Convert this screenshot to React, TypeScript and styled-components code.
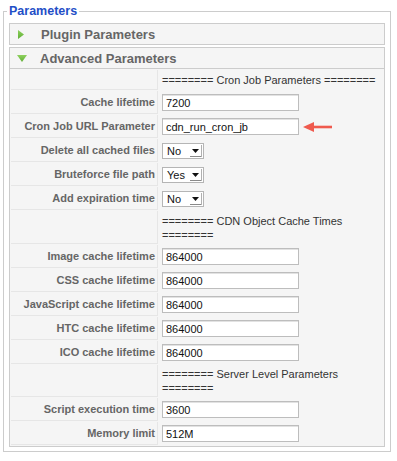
import React from "react";
import styled, { createGlobalStyle } from "styled-components";

const Global = createGlobalStyle`
  html, body { margin: 0; padding: 0; background: #fff; }
  body { font-family: "Liberation Sans", Arial, sans-serif; }
`;

const Fieldset = styled.fieldset`
  margin: 3px 0 0 3px;
  width: 388px;
  box-sizing: border-box;
  border: 1px solid #cccccc;
  padding: 4px 5px 4px 5px;
  min-width: 0;
`;

const Legend = styled.legend`
  color: #1f4fc7;
  font-size: 12.5px;
  font-weight: bold;
  line-height: 16px;
  padding: 0 2px;
  margin-left: -2px;
`;

const Pane = styled.div`
  border: 1px solid #cccccc;
  background: #f5f5f5;
  & + & { margin-top: 2px; }
`;

const Title = styled.div<{ $open?: boolean }>`
  height: 20px;
  display: flex;
  align-items: center;
  padding-left: ${(p) => (p.$open ? "7px" : "8px")};
  color: #666;
  font-size: 13px;
  font-weight: bold;
  border-bottom: ${(p) => (p.$open ? "1px solid #cccccc" : "none")};
`;

const TriangleBox = styled.span`
  width: 15px;
  margin-right: 8px;
  display: inline-flex;
  align-items: center;
  justify-content: flex-start;
`;

const Params = styled.div`
  display: grid;
  grid-template-columns: 147px 1fr;
  column-gap: 1px;
  row-gap: 1px;
  padding: 1px;
`;

const Key = styled.div`
  border-right: 1px solid #e6e6e6;
  border-bottom: 1px solid #e6e6e6;
  color: #666;
  font-size: 11px;
  font-weight: bold;
  text-align: right;
  padding-right: 2px;
  display: flex;
  align-items: center;
  justify-content: flex-end;
  white-space: nowrap;
`;

const Value = styled.div<{ $h?: number }>`
  min-height: ${(p) => p.$h ?? 23}px;
  display: flex;
  align-items: center;
  padding-left: 3px;
`;

const SectionText = styled.div`
  color: #333;
  font-size: 11px;
  line-height: 14px;
  padding: 2px 0;
  white-space: nowrap;
`;

const Input = styled.div`
  width: 137px;
  height: 17px;
  box-sizing: border-box;
  border: 1px solid #bdbdbd;
  box-shadow: inset 0 1px 0 #e2e2e2;
  background: #fff;
  font-size: 11px;
  color: #111;
  padding-left: 3px;
  display: flex;
  align-items: center;
`;

const Select = styled.div`
  width: 42px;
  height: 16px;
  box-sizing: border-box;
  border: 1px solid #b5b5b5;
  background: #fff;
  font-size: 11px;
  color: #111;
  padding-left: 4px;
  display: flex;
  align-items: center;
  justify-content: space-between;
`;

const ArrowBox = styled.span`
  display: inline-flex;
  width: 14px;
  height: 14px;
`;

const Pointer = styled.span`
  display: inline-flex;
  margin-left: 4px;
`;

const RightTri = () => (
  <svg width="6" height="9" viewBox="0 0 6 9">
    <defs>
      <linearGradient id="gr" x1="0" y1="0" x2="0" y2="1">
        <stop offset="0" stopColor="#8fd15e" />
        <stop offset="1" stopColor="#5fae35" />
      </linearGradient>
    </defs>
    <polygon points="0,0 6,4.5 0,9" fill="url(#gr)" />
  </svg>
);

const DownTri = () => (
  <svg width="10" height="7" viewBox="0 0 10 7">
    <defs>
      <linearGradient id="gd" x1="0" y1="0" x2="0" y2="1">
        <stop offset="0" stopColor="#8fd15e" />
        <stop offset="1" stopColor="#5fae35" />
      </linearGradient>
    </defs>
    <polygon points="0,0 10,0 5,7" fill="url(#gd)" />
  </svg>
);

const SelArrow = () => (
  <svg width="14" height="14" viewBox="0 0 14 14">
    <polygon points="3,5 10,5 6.5,9" fill="#111" />
    <line x1="1" y1="12.5" x2="13" y2="12.5" stroke="#8a8a8a" strokeWidth="1" />
    <line x1="12.5" y1="1" x2="12.5" y2="13" stroke="#b0b0b0" strokeWidth="1" />
  </svg>
);

const RedArrow = () => (
  <svg width="30" height="12" viewBox="0 0 30 12">
    <line x1="9" y1="6" x2="29" y2="6" stroke="#ef5a4e" strokeWidth="2.6" />
    <polygon points="0,6 11,1 11,11" fill="#ef5a4e" />
  </svg>
);

type Row =
  | { kind: "section"; text: React.ReactNode; h?: number }
  | { kind: "input"; label: string; value: string; arrow?: boolean }
  | { kind: "select"; label: string; value: string };

const rows: Row[] = [
  { kind: "section", text: "======== Cron Job Parameters ========", h: 20 },
  { kind: "input", label: "Cache lifetime", value: "7200" },
  { kind: "input", label: "Cron Job URL Parameter", value: "cdn_run_cron_jb", arrow: true },
  { kind: "select", label: "Delete all cached files", value: "No" },
  { kind: "select", label: "Bruteforce file path", value: "Yes" },
  { kind: "select", label: "Add expiration time", value: "No" },
  {
    kind: "section",
    text: (
      <>
        ======== CDN Object Cache Times
        <br />
        ========
      </>
    ),
    h: 33,
  },
  { kind: "input", label: "Image cache lifetime", value: "864000" },
  { kind: "input", label: "CSS cache lifetime", value: "864000" },
  { kind: "input", label: "JavaScript cache lifetime", value: "864000" },
  { kind: "input", label: "HTC cache lifetime", value: "864000" },
  { kind: "input", label: "ICO cache lifetime", value: "864000" },
  {
    kind: "section",
    text: (
      <>
        ======== Server Level Parameters
        <br />
        ========
      </>
    ),
    h: 32,
  },
  { kind: "input", label: "Script execution time", value: "3600" },
  { kind: "input", label: "Memory limit", value: "512M" },
];

export default function App() {
  return (
    <>
      <Global />
      <Fieldset>
        <Legend>Parameters</Legend>
        <Pane>
          <Title>
            <TriangleBox>
              <RightTri />
            </TriangleBox>
            Plugin Parameters
          </Title>
        </Pane>
        <Pane>
          <Title $open>
            <TriangleBox>
              <DownTri />
            </TriangleBox>
            Advanced Parameters
          </Title>
          <Params>
            {rows.map((r, i) => (
              <React.Fragment key={i}>
                <Key>{r.kind === "section" ? "" : r.label}</Key>
                {r.kind === "section" ? (
                  <Value $h={r.h}>
                    <SectionText>{r.text}</SectionText>
                  </Value>
                ) : r.kind === "input" ? (
                  <Value>
                    <Input>{r.value}</Input>
                    {r.arrow && (
                      <Pointer>
                        <RedArrow />
                      </Pointer>
                    )}
                  </Value>
                ) : (
                  <Value>
                    <Select>
                      {r.value}
                      <ArrowBox>
                        <SelArrow />
                      </ArrowBox>
                    </Select>
                  </Value>
                )}
              </React.Fragment>
            ))}
          </Params>
        </Pane>
      </Fieldset>
    </>
  );
}
